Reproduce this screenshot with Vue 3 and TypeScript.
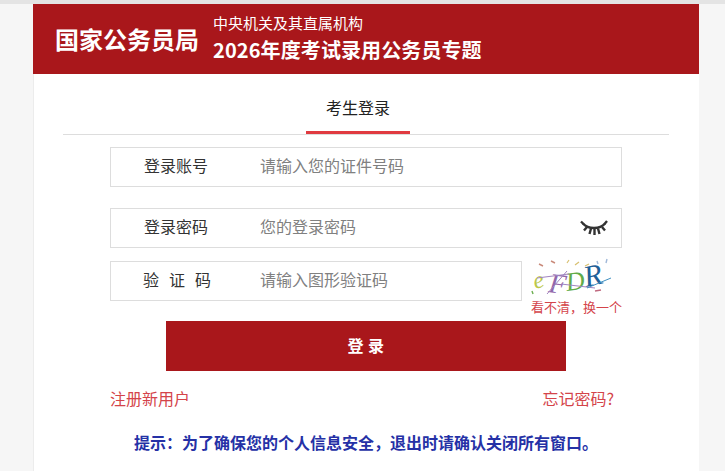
<script setup lang="ts">
interface Field {
  label: string
  placeholder: string
}

const account: Field = { label: '登录账号', placeholder: '请输入您的证件号码' }
const password: Field = { label: '登录密码', placeholder: '您的登录密码' }
const captcha: Field = { label: '验证码', placeholder: '请输入图形验证码' }

const captchaLetters = [
  { ch: 'e', x: 4, y: 31, size: 24, rot: -14, color: '#bcc84a' },
  { ch: 'F', x: 17, y: 34, size: 28, rot: 7, color: '#9268ac' },
  { ch: 'D', x: 36, y: 33, size: 26, rot: -8, color: '#62ab48' },
  { ch: 'R', x: 55, y: 29, size: 30, rot: -12, color: '#1f6098' },
]
</script>

<template>
  <div class="page">
    <div class="panel">
      <header class="banner">
        <div class="bureau">国家公务员局</div>
        <div class="titles">
          <div class="sub">中央机关及其直属机构</div>
          <div class="main">2026年度考试录用公务员专题</div>
        </div>
      </header>

      <nav class="tabs">
        <span class="tab">考生登录</span>
      </nav>

      <form class="form" @submit.prevent>
        <div class="field">
          <span class="label">{{ account.label }}</span>
          <span class="hint">{{ account.placeholder }}</span>
        </div>

        <div class="field second">
          <span class="label">{{ password.label }}</span>
          <span class="hint">{{ password.placeholder }}</span>
          <svg class="eye" width="28" height="16" viewBox="0 0 28 16" fill="none" stroke="#333" stroke-width="2.400">
            <path d="M3 3.500C8 9.500 20 9.500 25 3.500" />
            <path d="M3.500 4L1 1.500M7 7L4 10.500M11 8.500L9.500 14M14.500 9V15M18 8.500L19.500 14M22 7L25 10.500M24.500 4L27 1" />
          </svg>
        </div>

        <div class="captcha-row">
          <div class="field short">
            <span class="label spaced">{{ captcha.label }}</span>
            <span class="hint">{{ captcha.placeholder }}</span>
          </div>
          <div class="captcha">
            <svg class="captcha-img" width="90" height="40" viewBox="0 0 90 40">
              <text
                v-for="l in captchaLetters"
                :key="l.ch"
                :x="l.x"
                :y="l.y"
                :fill="l.color"
                :font-size="l.size"
                :transform="`rotate(${l.rot} ${l.x} ${l.y})`"
                font-family="Liberation Serif, serif"
                font-style="italic"
              >{{ l.ch }}</text>
              <path d="M6 20L38 16M16 36L36 13M30 26L64 30" stroke="#a184c0" stroke-width="1" fill="none" />
              <path d="M56 30L80 20" stroke="#3f8fc0" stroke-width="1" fill="none" />
              <path d="M8 6l4 2M20 3l4 2" stroke="#c98a7a" stroke-width="1.400" fill="none" />
              <path d="M36 5l2-3M44 7l4-3M54 8l4-2" stroke="#d8c070" stroke-width="1.200" fill="none" />
              <path d="M66 3l1 3M76 1l-1 4" stroke="#a0b8d8" stroke-width="1.400" fill="none" />
              <path d="M64 33l6-1" stroke="#c06a80" stroke-width="1.400" fill="none" />
              <path d="M1 33l1 3" stroke="#6cae50" stroke-width="1.400" fill="none" />
            </svg>
            <span class="refresh">看不清，换一个</span>
          </div>
        </div>

        <button class="submit" type="button">登 录</button>

        <div class="links">
          <span>注册新用户</span>
          <span>忘记密码?</span>
        </div>
      </form>

      <p class="notice">提示：为了确保您的个人信息安全，退出时请确认关闭所有窗口。</p>
    </div>
  </div>
</template>

<style>
html,
body {
  margin: 0;
  background: #f6f6f6;
}
</style>

<style scoped>
.page {
  height: 471px;
  overflow: hidden;
  box-sizing: border-box;
  border-top: 4px solid #e4e4e4;
  font-family: "Noto Sans CJK SC", "Liberation Sans", sans-serif;
}

.panel {
  width: 666px;
  height: 467px;
  margin-left: 33px;
  background: #fff;
  border-left: 1px solid #ececec;
  box-sizing: border-box;
}

.banner {
  height: 70px;
  margin-left: -1px;
  background: #a9171b;
  color: #fff;
  display: flex;
  align-items: center;
  padding-left: 22px;
}

.bureau {
  font-size: 24px;
  font-weight: 700;
  line-height: 32px;
  width: 158px;
}

.titles {
  display: flex;
  flex-direction: column;
  padding-top: 3px;
}

.sub {
  font-size: 15px;
  line-height: 20px;
  margin-top: -4px;
}

.main {
  font-size: 20px;
  font-weight: 700;
  line-height: 30px;
  margin-top: 2px;
  letter-spacing: 0.1px;
}

.tabs {
  margin: 0 30px 0 29px;
  height: 60px;
  border-bottom: 1px solid #ddd;
  display: flex;
  padding-left: 243px;
}

.tab {
  width: 104px;
  height: 60px;
  box-sizing: border-box;
  border-bottom: 3px solid #e03a40;
  padding-top: 22px;
  text-align: center;
  font-size: 16px;
  line-height: 22px;
  color: #222;
}

.form {
  width: 512px;
  margin: 12px 0 0 76px;
}

.field {
  height: 40px;
  box-sizing: border-box;
  border: 1px solid #ddd;
  padding-bottom: 4px;
  display: flex;
  align-items: center;
  font-size: 16px;
}

.second {
  margin-top: 21px;
}

.short {
  width: 412px;
  flex: none;
}

.label {
  width: 130px;
  box-sizing: border-box;
  text-align: center;
  color: #333;
}

.spaced {
  letter-spacing: 10px;
  padding-left: 12px;
}

.hint {
  margin-left: 19px;
  color: #808080;
}

.eye {
  margin-left: auto;
  margin-right: 13px;
  margin-top: 4px;
}

.captcha-row {
  margin-top: 13px;
  display: flex;
  height: 52px;
}

.captcha {
  margin-left: 9px;
  width: 91px;
  display: flex;
  flex-direction: column;
  margin-top: -3px;
}

.captcha-img {
  display: block;
  flex: none;
  overflow: visible;
}

.refresh {
  font-size: 13px;
  line-height: 18px;
  color: #d4444a;
  white-space: nowrap;
}

.submit {
  display: block;
  width: 400px;
  height: 50px;
  margin: 8px 0 0 56px;
  padding: 0 0 2px;
  border: none;
  background: #a9171b;
  color: #fff;
  font-family: inherit;
  font-size: 16px;
  font-weight: 700;
  letter-spacing: 0.5px;
  cursor: pointer;
}

.links {
  margin-top: 16px;
  width: 504px;
  display: flex;
  justify-content: space-between;
  font-size: 16px;
  line-height: 22px;
  color: #d4444a;
}

.notice {
  margin: 22px 0 0;
  padding-left: 100px;
  font-size: 16px;
  font-weight: 700;
  line-height: 22px;
  color: #2531a6;
  white-space: nowrap;
}
</style>
